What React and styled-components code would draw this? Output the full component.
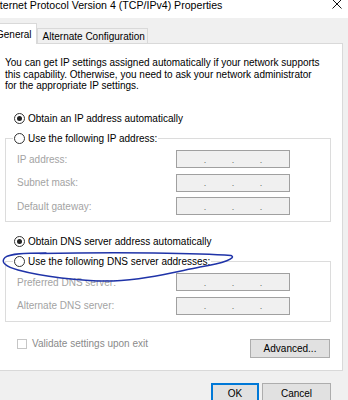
import React from "react"
import styled, { createGlobalStyle } from "styled-components"

const Global = createGlobalStyle`
  html, body {
    margin: 0;
    padding: 0;
    background: #f0f0f0;
    overflow: hidden;
  }
  body {
    font-family: "Liberation Sans", Arial, sans-serif;
    font-size: 10px;
    color: #000;
  }
`

const fields = {
  ip: ["IP address:", "Subnet mask:", "Default gateway:"],
  dns: ["Preferred DNS server:", "Alternate DNS server:"],
}

const App = () => {
  return (
    <Viewport>
      <Global />
      <Window>
        <TitleBar>
          <Title>Internet Protocol Version 4 (TCP/IPv4) Properties</Title>
          <Close width="10" height="10" viewBox="0 0 10 10">
            <path d="M0.5 0.5 L9.5 9.5 M9.5 0.5 L0.5 9.5" stroke="#111" strokeWidth="1" />
          </Close>
        </TitleBar>

        <Body>
          <Tabs>
            <Tab $active>General</Tab>
            <Tab>Alternate Configuration</Tab>
          </Tabs>

          <Panel>
            <Intro>
              You can get IP settings assigned automatically if your network supports
              <br />
              this capability. Otherwise, you need to ask your network administrator
              <br />
              for the appropriate IP settings.
            </Intro>

            <Option $top="21px">
              <Radio $checked />
              Obtain an IP address automatically
            </Option>

            <Group>
              <Legend>
                <Radio />
                Use the following IP address:
              </Legend>
              {fields.ip.map((f) => (
                <Field key={f}>
                  <FieldLabel>{f}</FieldLabel>
                  <IpBox />
                </Field>
              ))}
            </Group>

            <Option $top="13.5px">
              <Radio $checked />
              Obtain DNS server address automatically
            </Option>

            <Group>
              <Legend>
                <Radio />
                Use the following DNS server addresses:
              </Legend>
              {fields.dns.map((f) => (
                <Field key={f}>
                  <FieldLabel>{f}</FieldLabel>
                  <IpBox />
                </Field>
              ))}
            </Group>

            <Options>
              <Check>
                <CheckBox />
                Validate settings upon exit
              </Check>
              <Button $w="80px">Advanced...</Button>
            </Options>
          </Panel>

          <Footer>
            <Button $w="48px" $h="21px" $default>
              OK
            </Button>
            <Button $w="69px" $h="21px">
              Cancel
            </Button>
          </Footer>
        </Body>

        <Scribble width="348" height="400" viewBox="0 0 348 400">
          <path
            d="M40 253.5 C120 252, 200 253, 231 255.5 C237 258, 224 263, 200 267 C170 273, 142 280, 113 281 C80 281.5, 40 276, 18 270 C6 267, 0 262, 5 257.5 C10 253.5, 25 253, 46 253"
            fill="none"
            stroke="#1f33a8"
            strokeWidth="1.5"
            strokeLinecap="round"
          />
        </Scribble>
      </Window>
    </Viewport>
  )
}

const IpBox = () => (
  <Ip>
    <span />
    <Dot>.</Dot>
    <span />
    <Dot>.</Dot>
    <span />
    <Dot>.</Dot>
    <span />
  </Ip>
)

const Viewport = styled.div`
  width: 348px;
  height: 400px;
  overflow: hidden;
`

const Window = styled.div`
  position: relative;
  width: 358px;
  margin-left: -10px;
  background: #f0f0f0;
`

const TitleBar = styled.div`
  height: 18px;
  background: #fff;
  display: flex;
  justify-content: space-between;
  align-items: flex-start;
  padding: 0 6px 0 1px;
`

const Title = styled.div`
  font-size: 10.6px;
  line-height: 11px;
  white-space: nowrap;
`

const Close = styled.svg`
  display: block;
  margin-top: -1.5px;
`

const Body = styled.div`
  padding: 5px 5px 0 3px;
`

const Tabs = styled.div`
  display: flex;
  align-items: flex-end;
  height: 20px;
`

const Tab = styled.div`
  box-sizing: border-box;
  display: flex;
  align-items: center;
  white-space: nowrap;
  border: 1px solid #d9d9d9;
  border-bottom: none;
  height: ${(p) => (p.$active ? "21px" : "15px")};
  padding: ${(p) => (p.$active ? "0 4px 0 2px" : "0 2px 0 5px")};
  margin-bottom: ${(p) => (p.$active ? "-1px" : "0")};
  background: ${(p) => (p.$active ? "#fff" : "#f0f0f0")};
  position: relative;
  z-index: ${(p) => (p.$active ? 1 : 0)};
`

const Panel = styled.div`
  box-sizing: border-box;
  width: 350px;
  background: #fff;
  border: 1px solid #d9d9d9;
  padding: 13px 11px 12px 11px;
`

const Intro = styled.p`
  margin: 0;
  line-height: 11.5px;
  white-space: nowrap;
`

const Option = styled.label`
  display: flex;
  align-items: center;
  gap: 3px;
  height: 11px;
  padding-left: 9px;
  margin-top: ${(p) => p.$top};
`

const Radio = styled.span`
  box-sizing: border-box;
  width: 11px;
  height: 11px;
  border-radius: 50%;
  border: 1px solid #333;
  background: #fff;
  display: flex;
  align-items: center;
  justify-content: center;
  flex: none;

  &::after {
    content: "";
    width: 5px;
    height: 5px;
    border-radius: 50%;
    background: #222;
    display: ${(p) => (p.$checked ? "block" : "none")};
  }
`

const Group = styled.fieldset`
  margin: 9px 0 0 0;
  padding: 6.5px 0 6px 0;
  border: 1px solid #dcdcdc;
  display: flex;
  flex-direction: column;
  gap: 5.5px;
`

const Legend = styled.legend`
  display: flex;
  align-items: center;
  gap: 3px;
  height: 11px;
  line-height: 11px;
  margin-left: 7px;
  padding: 0 1px;
`

const Field = styled.div`
  display: grid;
  grid-template-columns: 159px 114px;
  align-items: center;
  padding-left: 11px;
  height: 18px;
`

const FieldLabel = styled.span`
  color: #a3a3a3;
  white-space: nowrap;
`

const Ip = styled.div`
  box-sizing: border-box;
  height: 18px;
  border: 1px solid #a0a0a0;
  background: #f0f0f0;
  display: flex;
  align-items: center;

  span:not([class]) {
    flex: 1;
  }
`

const Dot = styled.span`
  width: 0;
  display: flex;
  justify-content: center;
  color: #6d6d6d;
  font-size: 9px;
  line-height: 9px;
  margin-top: 2px;
`

const Options = styled.div`
  display: flex;
  align-items: flex-start;
  margin-top: 17px;
  padding: 0 1px 0 12px;
`

const Check = styled.label`
  display: flex;
  align-items: center;
  gap: 5px;
  height: 10px;
  color: #8a8a8a;
  white-space: nowrap;
`

const CheckBox = styled.span`
  box-sizing: border-box;
  width: 10px;
  height: 10px;
  border: 1px solid #c6c6c6;
  background: #fff;
`

const Button = styled.button`
  box-sizing: border-box;
  width: ${(p) => p.$w};
  height: ${(p) => p.$h || "19px"};
  margin-left: auto;
  padding: 0;
  font-family: inherit;
  font-size: 10px;
  color: #000;
  background: #e1e1e1;
  border: 1px solid ${(p) => (p.$default ? "#0078d7" : "#adadad")};
  box-shadow: ${(p) => (p.$default ? "inset 0 0 0 1px #0078d7" : "none")};
`

const Footer = styled.div`
  display: flex;
  justify-content: flex-end;
  gap: 3px;
  padding: 12px 12px 0 0;

  & > button {
    margin-left: 0;
  }
`

const Scribble = styled.svg`
  position: absolute;
  left: 10px;
  top: 0;
  pointer-events: none;
`

export default App
